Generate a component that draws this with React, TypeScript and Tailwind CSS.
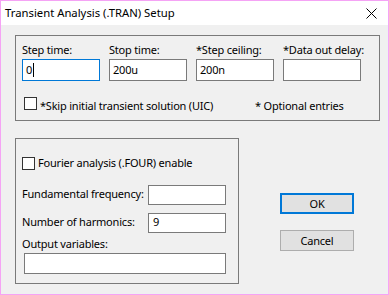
const font = { fontFamily: '"Noto Sans", "Segoe UI", sans-serif' };

function Field({ label, value, focused }: { label: string; value?: string; focused?: boolean }) {
  return (
    <div className="flex w-[78px] flex-col">
      <span className="h-[16px] whitespace-nowrap leading-[16px]">{label}</span>
      <div
        className={`mt-[1px] flex h-[22px] items-center border bg-white px-[3px] ${
          focused ? "border-[#0078d7]" : "border-[#7a7a7a]"
        }`}
      >
        {value}
        {focused && <span className="ml-[1px] h-[14px] w-[1px] bg-black" />}
      </div>
    </div>
  );
}

function CheckBox() {
  return <span className="inline-block size-[13px] shrink-0 border border-[#333] bg-white" />;
}

export default function App() {
  return (
    <div
      className="flex h-[295px] w-[389px] flex-col whitespace-nowrap border border-[#f5a3f5] bg-[#f0f0f0] text-[11px] text-black"
      style={font}
    >
      <div className="flex h-[24px] items-center justify-between bg-white pl-[4px] pr-[11px] text-[11.3px]">
        <span>Transient Analysis (.TRAN) Setup</span>
        <svg width="11" height="11" viewBox="0 0 11 11">
          <path d="M0.5 0.5 L10.5 10.5 M10.5 0.5 L0.5 10.5" stroke="#000" strokeWidth="1" />
        </svg>
      </div>

      <div className="flex flex-col pl-[14px] pt-[10px] tracking-[-0.2px]">
        <div className="flex h-[86px] w-[365px] flex-col border border-[#7a7a7a] pl-[6px] pt-[6px]">
          <div className="flex gap-[9px]">
            <Field label="Step time:" value="0" focused />
            <Field label="Stop time:" value="200u" />
            <Field label="*Step ceiling:" value="200n" />
            <Field label="*Data out delay:" />
          </div>
          <div className="mt-[16px] flex items-center">
            <span className="ml-[2px]"><CheckBox /></span>
            <span className="ml-[3px] w-[215px]">*Skip initial transient solution (UIC)</span>
            <span>* Optional entries</span>
          </div>
        </div>

        <div className="mt-[17px] flex">
          <div className="flex h-[146px] w-[224px] flex-col border border-[#7a7a7a] pl-[6px] pt-[16px]">
            <div className="flex items-center">
              <CheckBox />
              <span className="ml-[3px]">Fourier analysis (.FOUR) enable</span>
            </div>
            <div className="mt-[13px] flex items-center justify-between pr-[12px]">
              <span>Fundamental frequency:</span>
              <div className="h-[20px] w-[78px] border border-[#7a7a7a] bg-white" />
            </div>
            <div className="mt-[8px] flex items-center justify-between pr-[12px]">
              <span>Number of harmonics:</span>
              <div className="flex h-[20px] w-[78px] items-center border border-[#7a7a7a] bg-white px-[4px]">9</div>
            </div>
            <span className="mt-[3px] h-[16px] leading-[16px]">Output variables:</span>
            <div className="ml-[2px] mt-[1px] h-[21px] w-[202px] border border-[#7a7a7a] bg-white" />
          </div>

          <div className="ml-[41px] mt-[55px] flex flex-col gap-[16px]">
            <button className="h-[21px] w-[74px] border-2 border-[#0078d7] bg-[#e1e1e1] leading-none">OK</button>
            <button className="h-[21px] w-[74px] border border-[#adadad] bg-[#e1e1e1] leading-none">Cancel</button>
          </div>
        </div>
      </div>
    </div>
  );
}
